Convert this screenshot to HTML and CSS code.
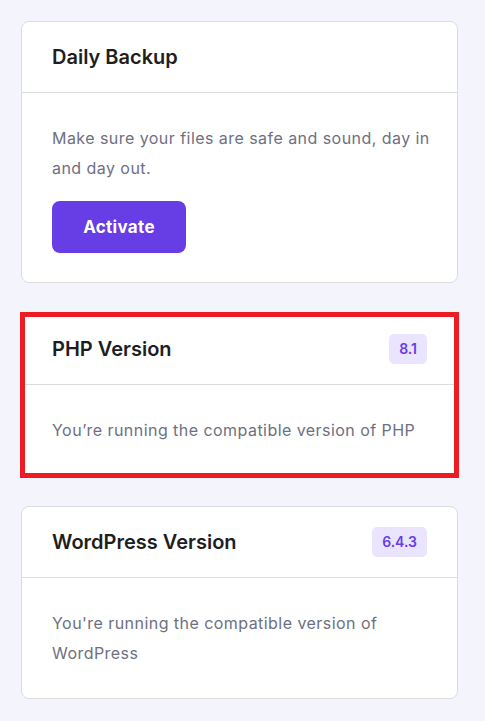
FILE: index.html
```html
<!DOCTYPE html>
<html lang="en">
<head>
    <meta charset="UTF-8">
    <meta name="viewport" content="width=device-width, initial-scale=1.0">
    <title>Website status</title>
    <link rel="stylesheet" href="styles.css">
</head>
<body>
    <div class="list">
        <div class="card">
            <div class="card-head">
                <h2 class="card-title">Daily Backup</h2>
            </div>
            <div class="card-body">
                <p class="card-text">Make sure your files are safe and sound, day in and day out.</p>
                <button class="btn">Activate</button>
            </div>
        </div>

        <div class="card card-marked">
            <div class="card-head">
                <h2 class="card-title">PHP Version</h2>
                <span class="badge">8.1</span>
            </div>
            <div class="card-body">
                <p class="card-text">You’re running the compatible version of PHP</p>
            </div>
        </div>

        <div class="card">
            <div class="card-head">
                <h2 class="card-title">WordPress Version</h2>
                <span class="badge">6.4.3</span>
            </div>
            <div class="card-body">
                <p class="card-text">You're running the compatible version of WordPress</p>
            </div>
        </div>
    </div>
</body>
</html>
```

FILE: styles.css
```css
body {
    margin: 0;
    background: #f4f4fd;
    color: #1d1e20;
    font-family: Inter, "Noto Sans", sans-serif;
}
.list {
    display: flex;
    flex-direction: column;
    gap: 30px;
    width: 437px;
    padding: 21px 0;
    margin-left: 21px;
}
.card {
    position: relative;
    background: #fff;
    border: 1px solid #dadce0;
    border-radius: 8px;
}
.card-marked::after {
    content: '';
    position: absolute;
    top: -2px;
    left: -2px;
    right: -2px;
    bottom: -3px;
    border: 5px solid #ed1c24;
}
.card-head {
    display: flex;
    justify-content: space-between;
    align-items: center;
    height: 70px;
    padding: 0 30px;
    border-bottom: 1px solid #dadce0;
}
.card-title {
    margin: 0;
    font-size: 20px;
    font-weight: 600;
}
.badge {
    height: 30px;
    line-height: 30px;
    padding: 0 10px;
    border-radius: 5px;
    background: #ebe4ff;
    color: #673de6;
    font-size: 14px;
    font-weight: 600;
}
.card-body {
    padding: 30px 0 30px 30px;
}
.card-text {
    margin: 0;
    font-size: 16px;
    letter-spacing: 0.45px;
    line-height: 30px;
    color: #6d7081;
}
.btn {
    display: block;
    margin: 18px 0 -1px;
    width: 134px;
    height: 52px;
    border: 0;
    border-radius: 8px;
    background: #673de6;
    color: #fff;
    font-family: inherit;
    font-size: 17px;
    font-weight: 700;
    letter-spacing: 0.3px;
}
```
